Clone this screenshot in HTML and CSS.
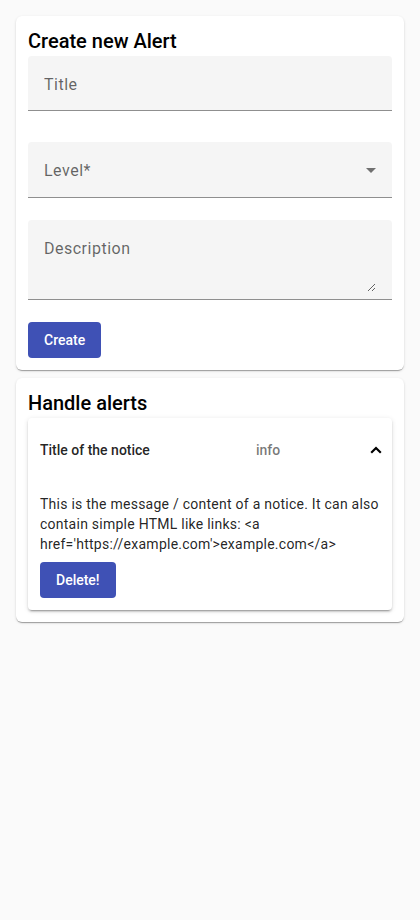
FILE: index.html
```html
<!DOCTYPE html>
<html lang="en">
<head>
<meta charset="utf-8">
<title>Alerts</title>
<link rel="stylesheet" href="styles.css">
</head>
<body>
<main class="page">
  <section class="card">
    <h2 class="card-title">Create new Alert</h2>
    <div class="field field-title">
      <input class="field-input" type="text" placeholder="Title">
    </div>
    <div class="field field-select">
      <span class="field-label">Level*</span>
      <svg class="select-arrow" width="10" height="5" viewBox="0 0 10 5"><path d="M0 0 L10 0 L5 5 Z" fill="rgba(0,0,0,0.54)"/></svg>
    </div>
    <div class="field field-area">
      <textarea class="field-textarea" placeholder="Description"></textarea>
    </div>
    <button class="btn btn-create" type="button">Create</button>
  </section>

  <section class="card">
    <h2 class="card-title">Handle alerts</h2>
    <div class="panel">
      <div class="panel-header">
        <span class="panel-title">Title of the notice</span>
        <span class="panel-desc">info</span>
        <svg class="chevron" width="12" height="8" viewBox="0 0 12 8"><path d="M1.2 6.8 L6 2 L10.8 6.8" fill="none" stroke="#000" stroke-width="2.2"/></svg>
      </div>
      <div class="panel-body">
        <p class="panel-text">This is the message / content of a notice. It can also contain simple HTML like links: &lt;a href='https://example.com'&gt;example.com&lt;/a&gt;</p>
        <button class="btn btn-delete" type="button">Delete!</button>
      </div>
    </div>
  </section>
</main>
</body>
</html>
```

FILE: styles.css
```css
html, body {
  margin: 0;
  padding: 0;
  background: #fafafa;
  font-family: Roboto, "Liberation Sans", sans-serif;
  color: rgba(0, 0, 0, 0.87);
}

.page {
  padding: 16px;
  display: flex;
  flex-direction: column;
  gap: 8px;
}

.card {
  background: #fff;
  border-radius: 6px;
  padding: 8px 12px 12px;
  box-shadow: 0 2px 1px -1px rgba(0,0,0,.2), 0 1px 1px 0 rgba(0,0,0,.14), 0 1px 3px 0 rgba(0,0,0,.12);
  display: flex;
  flex-direction: column;
  align-items: stretch;
}

.card-title {
  margin: 0;
  padding-top: 2px;
  font-size: 20px;
  line-height: 30px;
  font-weight: 500;
  color: #000;
}

.field {
  background: #f5f5f5;
  border-radius: 4px 4px 0 0;
  border-bottom: 1px solid #8f8f8f;
  height: 53px;
  padding: 2px 16px 0;
  display: flex;
  align-items: center;
}

.field-title {
  height: 52px;
  margin-bottom: 31px;
}

.field-input {
  flex: 1;
  border: none;
  background: transparent;
  outline: none;
  padding: 0;
  font-family: Roboto, "Liberation Sans", sans-serif;
  font-size: 16px;
  letter-spacing: 0.5px;
  color: rgba(0,0,0,.87);
}

.field-input::placeholder,
.field-textarea::placeholder {
  color: rgba(0,0,0,.6);
  opacity: 1;
}

.field-select {
  margin-bottom: 22px;
  justify-content: space-between;
}

.field-label {
  font-size: 16px;
  letter-spacing: 0.5px;
  color: rgba(0,0,0,.6);
}

.field-area {
  height: 79px;
  padding-top: 0;
  align-items: flex-start;
  margin-bottom: 22px;
}

.field-textarea {
  flex: 1;
  margin-top: 17px;
  height: 55px;
  border: none;
  background: transparent;
  outline: none;
  padding: 0;
  font-family: Roboto, "Liberation Sans", sans-serif;
  font-size: 16px;
  line-height: 24px;
  letter-spacing: 0.5px;
  resize: vertical;
}

.btn {
  align-self: flex-start;
  background: #3f51b5;
  color: #fff;
  border: none;
  border-radius: 4px;
  height: 36px;
  padding: 0 16px;
  font-family: Roboto, "Liberation Sans", sans-serif;
  font-size: 14px;
  font-weight: 500;
  letter-spacing: 0;
}

.panel {
  background: #fff;
  border-radius: 4px;
  box-shadow: 0 3px 1px -2px rgba(0,0,0,.2), 0 2px 2px 0 rgba(0,0,0,.14), 0 1px 5px 0 rgba(0,0,0,.12);
}

.panel-header {
  height: 64px;
  padding: 0 10px 0 12px;
  display: flex;
  align-items: center;
  font-size: 14px;
}

.panel-title {
  flex: 0 0 200px;
  margin-right: 16px;
  font-weight: 500;
  color: rgba(0,0,0,.87);
}

.panel-desc {
  flex: 1;
  font-weight: 500;
  color: rgba(0,0,0,.54);
}

.panel-body {
  padding: 12px;
  display: flex;
  flex-direction: column;
}

.panel-text {
  margin: 0 0 8px;
  font-size: 14px;
  line-height: 20px;
  letter-spacing: 0.25px;
  color: rgba(0,0,0,.87);
}
```
